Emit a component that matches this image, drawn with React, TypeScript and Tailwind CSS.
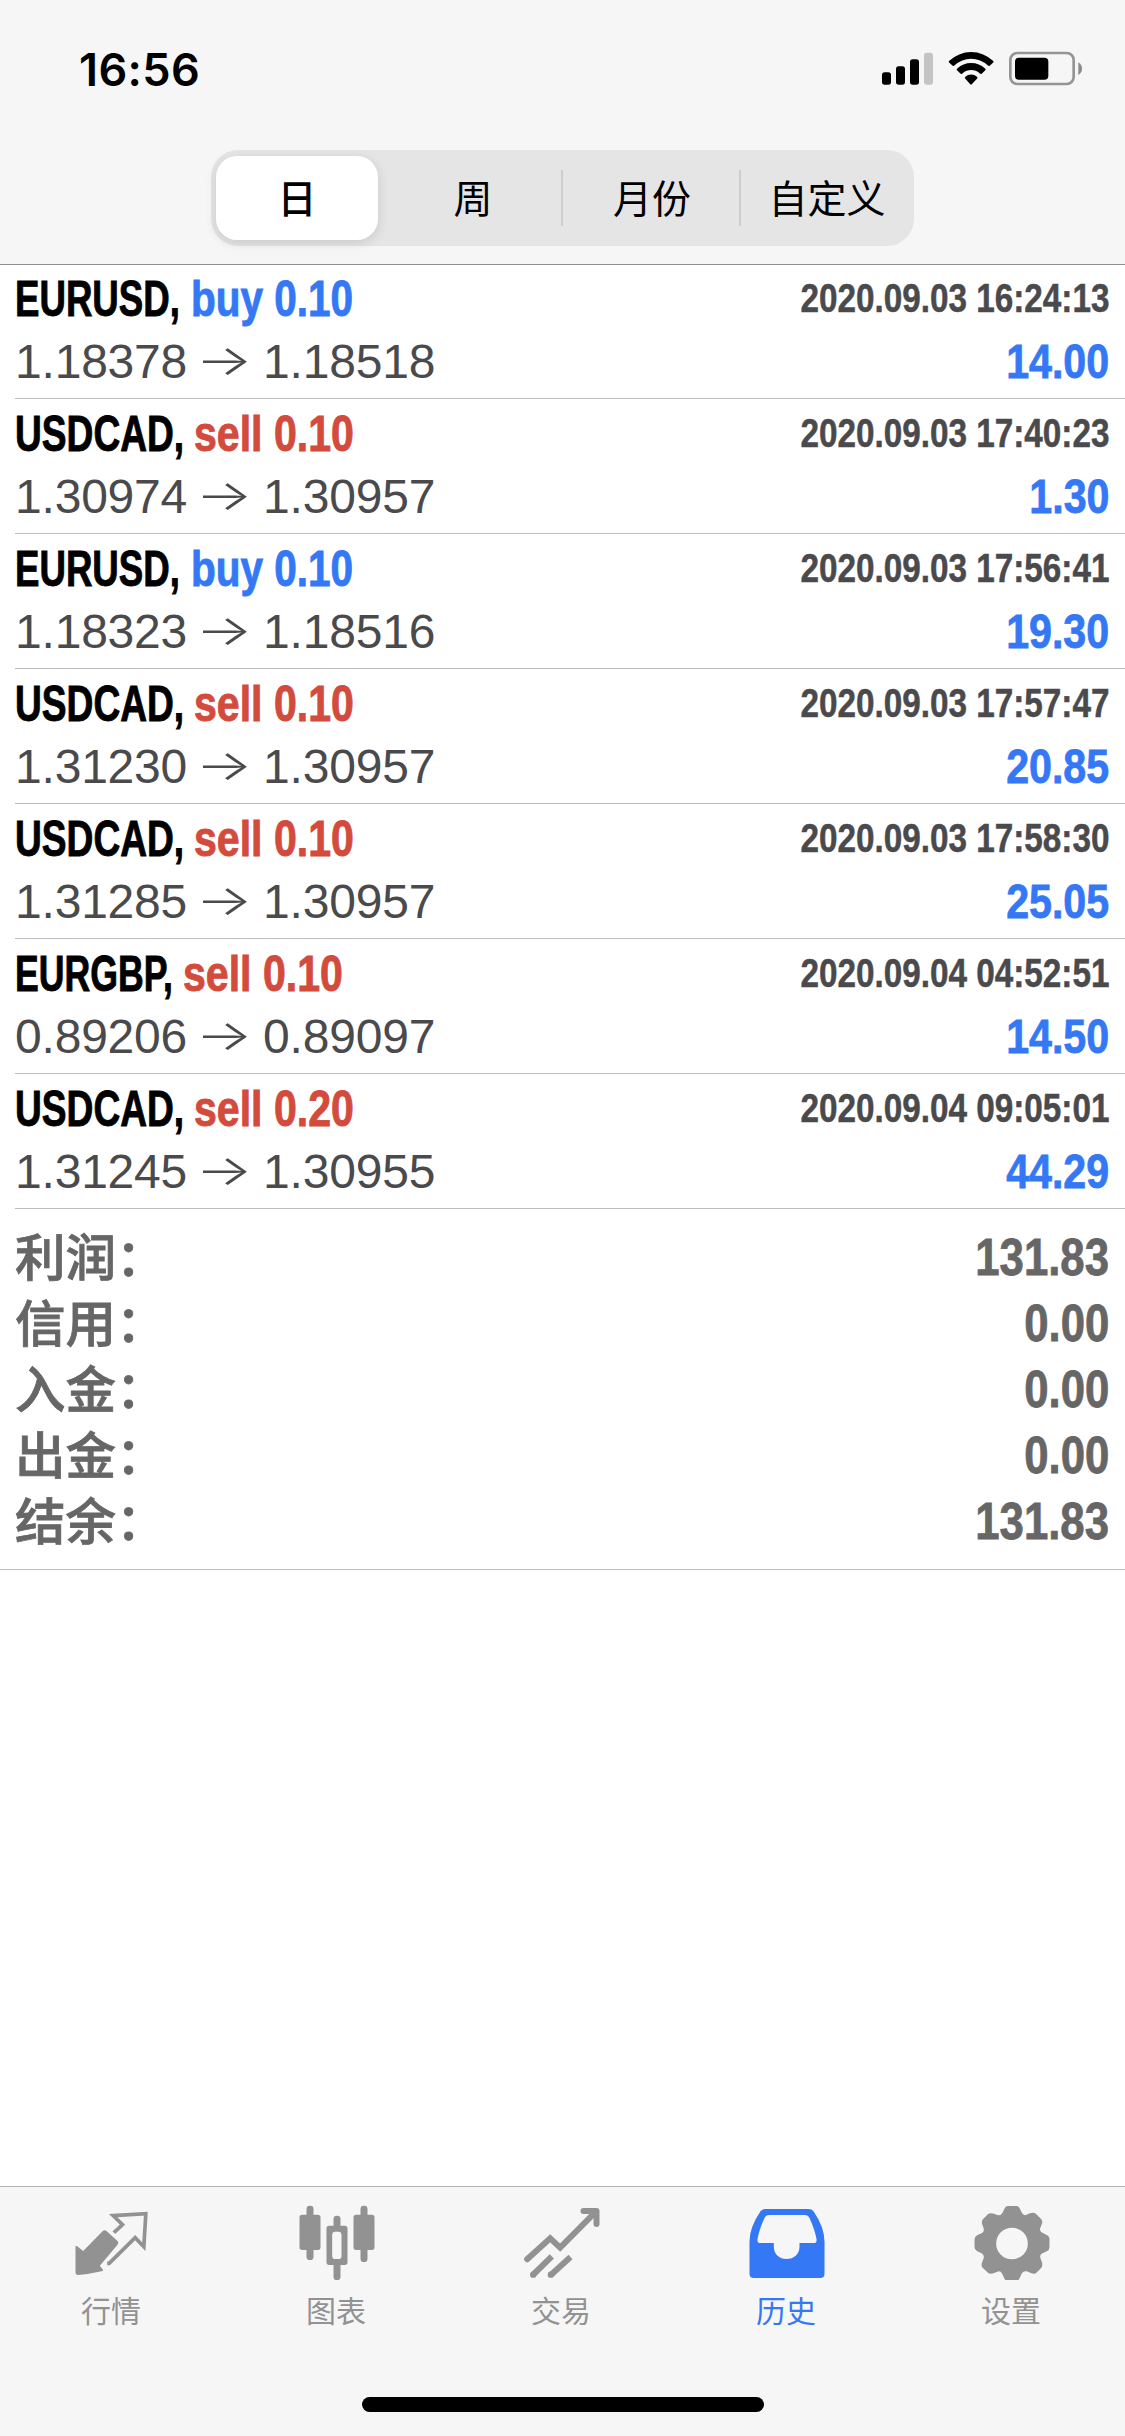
import type { ReactNode } from "react";

type Trade = {
  symbol: string;
  side: "buy" | "sell";
  volume: string;
  open: string;
  close: string;
  time: string;
  profit: string;
};

const trades: Trade[] = [
  { symbol: "EURUSD", side: "buy", volume: "0.10", open: "1.18378", close: "1.18518", time: "2020.09.03 16:24:13", profit: "14.00" },
  { symbol: "USDCAD", side: "sell", volume: "0.10", open: "1.30974", close: "1.30957", time: "2020.09.03 17:40:23", profit: "1.30" },
  { symbol: "EURUSD", side: "buy", volume: "0.10", open: "1.18323", close: "1.18516", time: "2020.09.03 17:56:41", profit: "19.30" },
  { symbol: "USDCAD", side: "sell", volume: "0.10", open: "1.31230", close: "1.30957", time: "2020.09.03 17:57:47", profit: "20.85" },
  { symbol: "USDCAD", side: "sell", volume: "0.10", open: "1.31285", close: "1.30957", time: "2020.09.03 17:58:30", profit: "25.05" },
  { symbol: "EURGBP", side: "sell", volume: "0.10", open: "0.89206", close: "0.89097", time: "2020.09.04 04:52:51", profit: "14.50" },
  { symbol: "USDCAD", side: "sell", volume: "0.20", open: "1.31245", close: "1.30955", time: "2020.09.04 09:05:01", profit: "44.29" },
];

const summary = [
  { label: "利润：", value: "131.83" },
  { label: "信用：", value: "0.00" },
  { label: "入金：", value: "0.00" },
  { label: "出金：", value: "0.00" },
  { label: "结余：", value: "131.83" },
];

const symbolWidth: Record<string, string> = {
  EURUSD: "w-[176px]",
  USDCAD: "w-[179px]",
  EURGBP: "w-[168px]",
};

const symbolScale: Record<string, string> = {
  EURUSD: "scale-x-[0.74]",
  USDCAD: "scale-x-[0.75]",
  EURGBP: "scale-x-[0.72]",
};

function StatusBar() {
  return (
    <div className="flex h-[138px] items-center justify-between pr-[42px] pl-[79px]">
      <span className="font-['Inter',sans-serif] text-[45px] leading-none font-semibold tracking-[0.4px]">16:56</span>
      <svg width="202" height="36" viewBox="0 0 606 108">
        <g transform="translate(-63 -64)">
          <rect x="66" y="128" width="27" height="37" rx="8" />
          <rect x="108" y="110" width="27" height="55" rx="8" />
          <rect x="150" y="89" width="27" height="76" rx="8" />
          <rect x="192" y="69" width="27" height="96" rx="8" fill="#c4c4c4" />
          <path d="M267 94A96 96 0 0 1 400 94Q402 97 399 99L389 108Q386 110 383 107A72 72 0 0 0 284 107Q281 110 278 108L268 99Q265 97 267 94Z" />
          <path d="M291 117A62 62 0 0 1 376 117Q378 120 376 122L365 132Q362 134 359 131A38 38 0 0 0 308 131Q305 134 302 132L291 122Q289 120 291 117Z" />
          <path d="M316 141A28 28 0 0 1 351 141Q354 144 351 147L336 163Q333 166 330 163L316 147Q313 144 316 141Z" />
          <rect x="451" y="70" width="190" height="93" rx="21" fill="none" stroke="#959595" strokeWidth="8" />
          <rect x="465" y="84" width="100" height="66" rx="12" />
          <path d="M655 98Q666 105 666 117T655 136Z" fill="#8a8a8a" />
        </g>
      </svg>
    </div>
  );
}

function SegmentedControl() {
  return (
    <div className="mx-auto mt-3 flex h-24 w-[703px] items-center rounded-[27px] bg-[#e5e5e6] pl-[5px] font-['Noto_Sans_CJK_SC',sans-serif] text-[39px] leading-none">
      <div className="flex h-[84px] w-[162px] items-center justify-center rounded-[21px] bg-white pb-[3px] font-medium shadow-[0_3px_12px_rgba(0,0,0,0.12)]">
        <span>日</span>
      </div>
      <div className="w-[183px] pb-[3px] pl-[7px] text-center">周</div>
      <div className="h-[56px] w-[2px] bg-[#cdcdcf]" />
      <div className="w-[176px] pb-[3px] pl-[2px] text-center">月份</div>
      <div className="h-[56px] w-[2px] bg-[#cdcdcf]" />
      <div className="w-[172px] pb-[3px] text-center">自定义</div>
    </div>
  );
}

function TradeRow({ trade }: { trade: Trade }) {
  const sideStyle = trade.side === "buy" ? "scale-x-[0.818] text-[#3478f6]" : "scale-x-[0.83] text-[#d34b3c]";
  return (
    <div className="ml-[15px] flex h-[135px] flex-col border-b border-[#bcbcbe] pt-[9px] pr-[16px]">
      <div className="flex h-[52px] items-center justify-between font-bold whitespace-nowrap">
        <div className="flex text-[49.5px] leading-[52px] [-webkit-text-stroke:0.9px_currentColor]">
          <div className={symbolWidth[trade.symbol]}>
            <span className={`inline-block origin-left ${symbolScale[trade.symbol]}`}>{trade.symbol},</span>
          </div>
          <span className={`inline-block origin-left ${sideStyle}`}>
            {trade.side} {trade.volume}
          </span>
        </div>
        <span className="-mt-[2px] inline-block origin-right scale-x-[0.832] text-[40px] text-[#4a4a4d] [-webkit-text-stroke:0.5px_currentColor]">
          {trade.time}
        </span>
      </div>
      <div className="mt-[10px] flex h-[54px] items-center justify-between text-[48px] leading-[54px]">
        <div className="flex tracking-[-0.2px] text-[#4a4a4d]">
          <span>{trade.open}</span>
          <span className="w-[76px] -translate-x-[1px] -translate-y-[2px] scale-x-[1.25] scale-y-[0.88] text-center font-['Inter',sans-serif] font-light">
            →
          </span>
          <span>{trade.close}</span>
        </div>
        <span className="inline-block origin-right scale-x-[0.857] font-bold text-[#3478f6] [-webkit-text-stroke:0.8px_currentColor]">
          {trade.profit}
        </span>
      </div>
    </div>
  );
}

function Tab({ label, active, viewBox, children }: { label: string; active?: boolean; viewBox: string; children: ReactNode }) {
  return (
    <div className={`flex flex-1 flex-col items-center pt-[13px] ${active ? "text-[#3478f6]" : "text-[#929292]"}`}>
      <svg width="80" height="80" viewBox={viewBox} fill="currentColor">
        {children}
      </svg>
      <span className="mt-[14px] mr-[3px] text-[30px] leading-[30px]">{label}</span>
    </div>
  );
}

export default function App() {
  return (
    <div className="flex h-[2436px] w-[1125px] flex-col overflow-hidden bg-white font-['Liberation_Sans','Noto_Sans_CJK_SC',sans-serif] text-black">
      <header className="relative z-10 h-[265px] shrink-0 border-b border-[#8e8e90] bg-[#f6f6f6]">
        <StatusBar />
        <SegmentedControl />
      </header>

      <main className="-mt-px flex-1">
        {trades.map((trade) => (
          <TradeRow key={trade.time} trade={trade} />
        ))}
        <section className="h-[361px] border-b border-[#bcbcbe] pt-[16px] pr-[16px] pl-[15px] text-[#666666]">
          {summary.map((item) => (
            <div key={item.label} className="flex h-[66px] items-center justify-between text-[51px] leading-[66px]">
              <span className="-mt-[9px] font-['Noto_Sans_CJK_SC',sans-serif] text-[50.5px] font-medium [-webkit-text-stroke:0.8px_currentColor]">
                {item.label}
              </span>
              <span className="inline-block origin-right scale-x-[0.857] font-bold [-webkit-text-stroke:0.8px_currentColor]">
                {item.value}
              </span>
            </div>
          ))}
        </section>
      </main>

      <footer className="flex h-[250px] shrink-0 flex-col items-center justify-between border-t border-[#b2b2b2] bg-[#f6f6f6] pb-[24px]">
        <nav className="flex w-full font-['Noto_Sans_CJK_SC',sans-serif]">
          <Tab label="行情" viewBox="217.5 90 240 240">
            <path d="M225 231Q225 225 230 229L248 243L307 183Q312 178 318 183L351 213Q356 218 351 224L298 287L306 297Q310 303 303 304Q270 312 233 315Q225 315 225 307Z" />
            <path d="M340 188L366 164L338 137L436 131L430 230L404 203L326 280H320" fill="none" stroke="currentColor" strokeWidth="11" />
          </Tab>
          <Tab label="图表" viewBox="892.5 90 240 240">
            <rect x="897" y="134" width="63" height="106" rx="8" />
            <rect x="918" y="107" width="21" height="163" rx="10" />
            <rect x="1059" y="134" width="63" height="106" rx="8" />
            <rect x="1080" y="107" width="21" height="169" rx="10" />
            <rect x="999" y="137" width="21" height="45" rx="10" />
            <rect x="999" y="270" width="21" height="60" rx="10" />
            <path fillRule="evenodd" d="M986 167H1033Q1041 167 1041 175V277Q1041 285 1033 285H986Q978 285 978 277V175Q978 167 986 167ZM1004 185Q995 185 995 195V257Q995 267 1004 267H1014Q1023 267 1023 257V195Q1023 185 1014 185Z" />
          </Tab>
          <Tab label="交易" viewBox="217.5 90 240 240">
            <g fill="none" stroke="currentColor" strokeWidth="18" strokeLinejoin="round">
              <path d="M230 268L299 205L329 233L436 125" strokeLinecap="round" strokeLinejoin="miter" />
              <path d="M399 123H438V162" strokeLinecap="round" />
              <path d="M247 315L304 259" />
              <path d="M301 315L360 261" />
            </g>
            <circle cx="248" cy="314" r="9.500" />
            <circle cx="301" cy="314" r="9.500" />
          </Tab>
          <Tab label="历史" active viewBox="892.5 90 240 240">
            <path fillRule="evenodd" d="M945 117H1074Q1084 117 1089 124Q1122 172 1122 215V311Q1122 324 1109 324H910Q897 324 897 311V215Q897 172 930 124Q935 117 945 117ZM956 135Q946 135 942 144Q926 179 921 207Q919 219 930 219H970V230C970 252 987 267 1008 267C1030 267 1047 252 1047 230V219H1089Q1100 219 1098 207Q1093 179 1077 144Q1073 135 1063 135Z" />
          </Tab>
          <Tab label="设置" viewBox="337.5 90 240 240">
            <path
              fillRule="evenodd"
              d="M442 108H468Q474 108 477 114L484 128Q487 135 495 136L508 130Q520 126 527 132L541 146Q548 153 544 162L539 175Q537 183 543 187L557 194Q567 197 567 208V231Q567 240 559 244L546 250Q538 253 539 262L545 279Q547 289 541 295L527 309Q521 314 511 309L499 304Q489 302 484 310L477 325Q474 333 466 333H444Q435 333 432 326L425 311Q422 304 414 304L401 309Q390 314 383 309L368 295Q361 289 364 279L370 263Q371 254 363 250L349 243Q342 239 342 230V209Q342 200 350 196L363 190Q371 186 370 177L365 163Q362 153 368 147L382 133Q389 127 400 131L413 136Q422 136 426 128L433 114Q436 108 442 108ZM454.500 173A47.500 47.500 0 1 0 454.500 268A47.500 47.500 0 1 0 454.500 173Z"
            />
          </Tab>
        </nav>
        <div className="h-[15px] w-[402px] rounded-full bg-black" />
      </footer>
    </div>
  );
}
